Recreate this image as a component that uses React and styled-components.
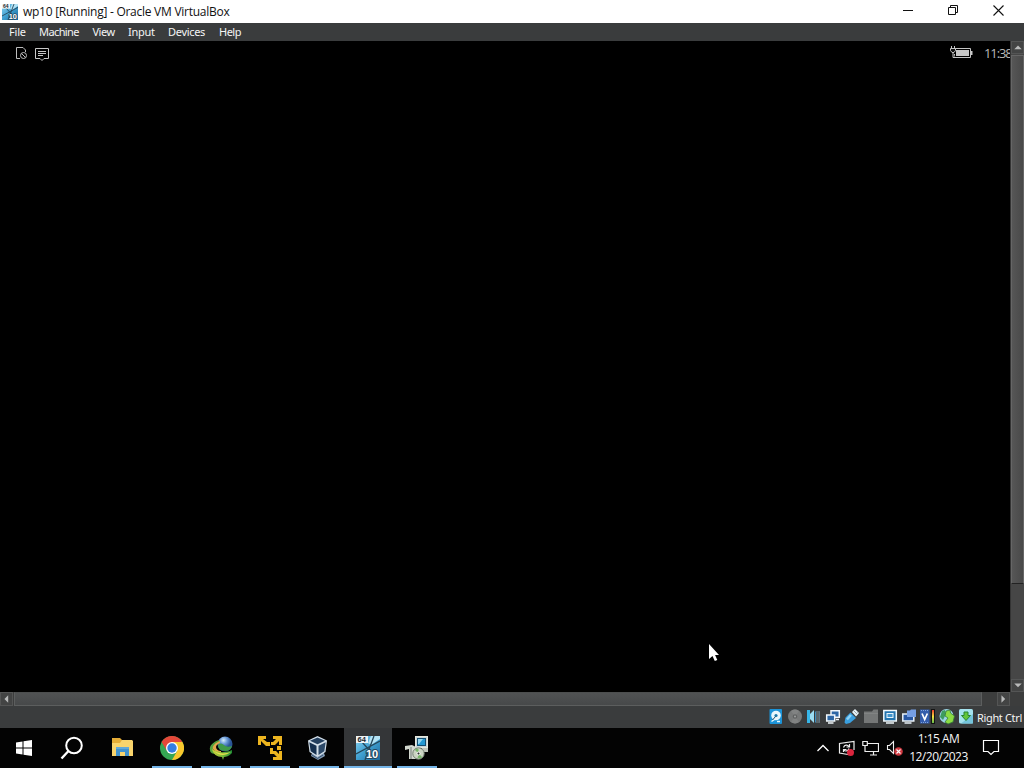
import React from "react";
import styled, { createGlobalStyle, css } from "styled-components";

/* ================= STYLES ================= */

const GlobalStyle = createGlobalStyle`
  * {
    box-sizing: border-box;
  }

  body {
    margin: 0;
    background: #000;
    overflow: hidden;
    font-family: "Open Sans", "Noto Sans", sans-serif;
  }

  svg {
    display: block;
    flex: none;
  }
`;

const Screen = styled.div`
  width: 1024px;
  height: 768px;
  display: flex;
  flex-direction: column;
  position: relative;
  overflow: hidden;
`;

const TitleBar = styled.header`
  height: 23px;
  flex: none;
  display: flex;
  align-items: center;
  padding-left: 2px;
  background: #fff;
  color: #111;
`;

const Title = styled.h1`
  margin: 1px auto 0 5px;
  font-size: 12px;
  font-weight: 400;
  line-height: 16px;
  letter-spacing: -0.26px;
  white-space: pre;
`;

const WindowButton = styled.button`
  width: ${({ $width }) => $width || 45}px;
  height: 23px;
  padding: 0 ${({ $inset }) => $inset || 0}px 2px 0;
  border: none;
  background: none;
  display: flex;
  align-items: center;
  justify-content: center;
`;

const MenuBar = styled.nav`
  height: 18px;
  flex: none;
  display: flex;
  align-items: center;
  padding-left: 9px;
  background: #3a3c3d;
`;

const MenuItem = styled.span`
  width: ${({ $width }) => $width}px;
  font-family: "Noto Sans", sans-serif;
  font-size: 11px;
  line-height: 16px;
  letter-spacing: ${({ $spacing }) => $spacing || 0}px;
  white-space: pre;
  color: #f4f4f4;
`;

const Viewport = styled.main`
  height: 651px;
  flex: none;
  display: flex;
  background: #000;
`;

const Guest = styled.section`
  width: 1010px;
  display: flex;
  align-items: flex-start;
  padding: 6px 0 0 15px;
  gap: 6px;
`;

const GuestStatus = styled.div`
  margin: -1px -1px 0 auto;
  display: flex;
  gap: 11px;
`;

const GuestClock = styled.span`
  width: 27px;
  font-size: 13px;
  line-height: 15px;
  letter-spacing: -1.1px;
  color: #b9b9b9;
  white-space: pre;
`;

const VerticalScroll = styled.div`
  width: 14px;
  display: flex;
  flex-direction: column;
  background: #464646;
  border-left: 1px solid #343434;
`;

const HorizontalScroll = styled.div`
  height: 14px;
  flex: none;
  display: flex;
  padding-right: 14px;
  background: #3c3d3d;
`;

const ScrollButton = styled.div`
  width: 13px;
  height: ${({ $horizontal }) => ($horizontal ? 14 : 13)}px;
  flex: none;
  display: flex;
  align-items: center;
  justify-content: center;
  background: #434444;
  border: 1px solid #545555;
`;

const ScrollThumb = styled.div`
  flex: none;
  ${({ $horizontal }) =>
    $horizontal
      ? css`
          width: 968px;
          margin: 0 auto 0 1px;
          background: linear-gradient(#505253, #47494a);
          border: 1px solid #5c5e5e;
          border-top-color: #4c4e4e;
        `
      : css`
          height: 529px;
          margin: 1px 0 auto;
          background: linear-gradient(90deg, #565656, #494949);
          border: 1px solid #666;
          border-bottom-color: #222;
        `}
`;

const StatusBar = styled.footer`
  height: 22px;
  flex: none;
  display: flex;
  align-items: center;
  justify-content: flex-end;
  gap: 3px;
  padding-right: 1px;
  background: #3a3c3d;
`;

const HostKey = styled.span`
  width: 46px;
  margin-top: 2px;
  font-family: "Noto Sans", sans-serif;
  font-size: 11px;
  line-height: 16px;
  letter-spacing: -0.35px;
  white-space: pre;
  color: #f4f4f4;
`;

const Taskbar = styled.div`
  height: 40px;
  flex: none;
  display: flex;
  background: #030303;
`;

const TaskButton = styled.div`
  width: 48px;
  height: 40px;
  margin-right: ${({ $gap }) => $gap ?? 1}px;
  display: flex;
  flex-direction: column;
  align-items: center;
  justify-content: space-between;
  background: ${({ $active }) => ($active ? "#343638" : "transparent")};

  &::after {
    content: "";
    width: ${({ $active }) => ($active ? 48 : 40)}px;
    height: 2px;
    background: ${({ $running }) => ($running ? "#75b5e8" : "transparent")};
  }
`;

const TaskIcon = styled.div`
  height: 38px;
  display: flex;
  align-items: center;
  padding-top: 1px;
  margin-left: ${({ $shift }) => $shift || 0}px;
`;

const Tray = styled.div`
  margin-left: auto;
  display: flex;
  align-items: center;
  padding-right: 24px;
`;

const TrayIcons = styled.div`
  display: flex;
  align-items: center;
  gap: 7px;
`;

const Clock = styled.div`
  width: 72px;
  margin: 0 7px 0 0;
  padding-right: 1px;
  text-align: center;
  font-size: 12px;
  line-height: 18px;
  letter-spacing: -0.5px;
  color: #f5f5f5;
`;

const Pointer = styled.svg`
  position: absolute;
  left: 708px;
  top: 643px;
`;

/* ================= ICONS ================= */

const WinTenIcon = ({ size = 24 }) => (
  <svg width={size} height={size} viewBox="0 0 24 24">
    <defs>
      <linearGradient id="winBlue" x1="0" y1="0" x2="1" y2="1">
        <stop offset="0" stopColor="#8ed6f2" />
        <stop offset=".5" stopColor="#3f9fd0" />
        <stop offset="1" stopColor="#1d6a9c" />
      </linearGradient>
    </defs>
    <rect width="24" height="24" fill="url(#winBlue)" />
    <path d="M15 0h9v3l-9 6-3-2z" fill="#b3e2f4" />
    <path d="M0 18L24 5M9 24L18 0M6 6l8 9" stroke="#254659" strokeWidth="1.300" />
    <rect width="12" height="7" fill="#eef3f5" />
    <text x="1.500" y="6.200" fontSize="7.500" fontWeight="700" fontFamily="Liberation Sans, sans-serif" fill="#20282d">64</text>
    <text x="10" y="22" fontSize="11" fontWeight="700" fontFamily="Liberation Sans, sans-serif" fill="#fff" stroke="#24485f" strokeWidth="2" paintOrder="stroke">10</text>
  </svg>
);

const Minimize = () => (
  <svg width="11" height="11">
    <path d="M0 5.500h10" stroke="#111" />
  </svg>
);

const Restore = () => (
  <svg width="11" height="11" fill="none" stroke="#111">
    <path d="M.5 2.500h7v7h-7zM2.500 2.500v-2h7v7h-2" />
  </svg>
);

const Close = () => (
  <svg width="11" height="11">
    <path d="M.5.5l10 10M10.500.5l-10 10" stroke="#111" strokeWidth="1.100" />
  </svg>
);

const NoSim = () => (
  <svg width="14" height="14" fill="none" stroke="#bdbdbd">
    <path d="M5 11.500H1.500V.5H8l2.500 2.500v2" />
    <circle cx="8.500" cy="8.500" r="3" />
    <path d="M6.500 6.500l4 4" />
  </svg>
);

const Message = () => (
  <svg width="14" height="14" fill="none" stroke="#c8c8c8">
    <path d="M.5 1.500h13v10H9l-2 2-2-2H.5zM3 4.500h8M3 6.500h8M3 8.500h5" />
  </svg>
);

const Battery = () => (
  <svg width="23" height="13">
    <path d="M5 2.500h15.500v9H4.500V8" fill="none" stroke="#c4c4c4" />
    <path d="M6 4h13v6H6zM21 5h1.500v4H21z" fill="#c8c8c8" />
    <path d="M1.500 0v2M4.500 0v2M.5 2.500h5v2L4 6.500H2l-1.500-2zM3 6v5.500h2" fill="#111" stroke="#c4c4c4" />
  </svg>
);

const arrows = {
  up: "M0 5l4.500-4.500L9 5z",
  down: "M0 .5h9L4.500 5z",
  left: "M5 0v9L.5 4.500z",
  right: "M.5 0v9L5 4.500z",
};

const Arrow = ({ to }) => {
  const sideways = to === "left" || to === "right";
  return (
    <svg
      width={sideways ? 5 : 8}
      height={sideways ? 8 : 5}
      viewBox={sideways ? "0 0 6 9" : "0 0 9 6"}
    >
      <path d={arrows[to]} fill="#b9baba" />
    </svg>
  );
};

const HardDisk = () => (
  <svg width="16" height="16">
    <rect x="1.500" y="0" width="12.500" height="15" rx="1" fill="#1b93d8" />
    <circle cx="8" cy="6.500" r="4.800" fill="#e9f7fc" />
    <circle cx="8" cy="6.500" r="1.600" fill="#1977aa" />
    <path d="M3.500 12.500l3-2M9 12.500h3" stroke="#e9f7fc" strokeWidth="1.500" />
    <path d="M7.500 7.500l-3 3.500" stroke="#244d68" />
  </svg>
);

const OpticalDisk = () => (
  <svg width="16" height="16">
    <circle cx="8" cy="7.500" r="7" fill="#777979" />
    <path d="M8 7.500L4 2a7 7 0 018 0zM8 7.500l4 5.500a7 7 0 01-8 0z" fill="#818383" />
    <circle cx="8" cy="7.500" r="2.200" fill="#5f6161" />
    <circle cx="8" cy="7.500" r="1" fill="#a0a2a2" />
  </svg>
);

const Audio = () => (
  <svg width="16" height="16">
    <path d="M1 1h3v13H1z" fill="#36b5e8" />
    <path d="M4 5l4-4v13l-4-4z" fill="#9bdcf2" />
    <path d="M10 3h4M10 5h4M10 7h4M10 9h4M10 11h4M10 13h4" stroke="#7b8d98" />
    <path d="M9.500 2.500v11" stroke="#3f8fc0" />
    <path d="M13.500 2.500v11" stroke="#5f7482" />
  </svg>
);

const Network = () => (
  <svg width="16" height="16">
    <path d="M6 1.800h8.300v6.500H6z" fill="#2d67a5" stroke="#f0f6fa" strokeWidth="1.500" />
    <path d="M1.700 6h8v6h-8z" fill="#2d67a5" stroke="#f0f6fa" strokeWidth="1.500" />
    <path d="M3 14h5.500M11 10.500h3" stroke="#f0f6fa" strokeWidth="1.500" />
  </svg>
);

const Usb = () => (
  <svg width="16" height="16">
    <path d="M8 3l3-3 4 4-3 3.500z" fill="#e8f2f7" />
    <path d="M6.500 3.500L12 9l-6 5-4 1-1.500-1.500 1-5z" fill="#3a9fdf" />
    <path d="M7 6l-4 4.500" stroke="#8fd2f4" strokeWidth="2.500" />
    <path d="M10.500 2.500l1 1M12.500 4.500l.8-.8" stroke="#4b5961" />
  </svg>
);

const Folder = () => (
  <svg width="16" height="16">
    <path d="M1 2.500h8L10.500.500H15V14H1z" fill="#757777" />
    <path d="M1 4.500h14" stroke="#818383" />
  </svg>
);

const Display = () => (
  <svg width="16" height="16">
    <rect x="1.800" y="1.500" width="12.500" height="10.500" fill="#2475b0" stroke="#f1f8fc" strokeWidth="1.500" />
    <rect x="5" y="4.500" width="6" height="4" fill="#4296cf" stroke="#e7f4fb" />
    <path d="M4 14h8" stroke="#f1f8fc" strokeWidth="1.500" />
  </svg>
);

const Recording = () => (
  <svg width="16" height="16">
    <path d="M1.800 5h11v7h-11z" fill="#2858a4" stroke="#e9f1f8" strokeWidth="1.500" />
    <path d="M6 1.500h3L10 .5h5V8H6z" fill="#769fe5" />
    <path d="M3.500 14h7" stroke="#e9f1f8" strokeWidth="1.500" />
  </svg>
);

const Processor = () => (
  <svg width="16" height="16">
    <defs>
      <linearGradient id="cpuLoad" x1="0" y1="0" x2="0" y2="1">
        <stop stopColor="#ee3b2a" />
        <stop offset=".5" stopColor="#f5df41" />
        <stop offset="1" stopColor="#65ba4c" />
      </linearGradient>
    </defs>
    <rect x="0" y=".5" width="9.500" height="14" fill="#345dac" />
    <path d="M1 1.500h8M1 13.500h8" stroke="#7fa2dd" strokeDasharray="1 1" />
    <path d="M2 4.500l2.700 6 2.700-6" fill="none" stroke="#fff" strokeWidth="1.700" />
    <rect x="11" y="0" width="4" height="15" fill="#131313" />
    <rect x="12" y="1" width="2" height="13" fill="url(#cpuLoad)" />
  </svg>
);

const MouseIntegration = () => (
  <svg width="16" height="16">
    <circle cx="7.500" cy="7" r="7" fill="#9bd3e4" />
    <path d="M3 2l3-1 1 4-3 6-3-3z" fill="#3e9c60" />
    <path d="M7 2l4-1 .5 3 4 3-1.500 6-5 2-3-2 3-4-3-2z" fill="#8cdc43" stroke="#337b39" strokeWidth=".8" />
  </svg>
);

const HostKeyIcon = () => (
  <svg width="16" height="16">
    <rect x="1" y="0" width="14" height="14.500" rx="1.500" fill="#a5e3ef" />
    <path d="M3 14.500L15 5v9.500z" fill="#74c4dc" />
    <path d="M6 3h4v3.500h2.500L8 11.500 3.500 6.500H6z" fill="#63c63b" stroke="#278532" />
  </svg>
);

const WindowsLogo = () => (
  <svg width="18" height="18">
    <path d="M1 3.500l6.500-1v6H1zM8.500 2.300L17 1v7.500H8.500zM1 9.500h6.500v6L1 14.600zM8.500 9.500H17V17l-8.500-1.300z" fill="#fff" />
  </svg>
);

const Search = () => (
  <svg width="24" height="24" fill="none" stroke="#fff" strokeWidth="2">
    <circle cx="14" cy="9.500" r="7.800" />
    <path d="M8.500 15L1.500 22.500" strokeWidth="2.400" />
  </svg>
);

const Explorer = () => (
  <svg width="24" height="24">
    <path d="M2 2h8l2 2h10v15H2z" fill="#e5ad37" />
    <path d="M12 4h10l1 1v15H2V7h8z" fill="#f9d46c" />
    <path d="M6 11h13v9h-4v-4H10v4H6z" fill="#4293ce" />
    <path d="M6 11h13v2H6z" fill="#62a9d9" />
  </svg>
);

const Chrome = () => (
  <svg width="24" height="24">
    <circle cx="12" cy="12" r="12" fill="#35a653" />
    <path d="M12 12L1.600 6A12 12 0 0122.400 6z" fill="#e44739" />
    <path d="M12 6h10.400A12 12 0 0112 24l5.200-9z" fill="#f9c72d" />
    <path d="M1.600 6L7 15l5-9z" fill="#e44739" />
    <circle cx="12" cy="12" r="6" fill="#fff" />
    <circle cx="12" cy="12" r="4.700" fill="#347ee2" />
  </svg>
);

const DownloadGlobe = () => (
  <svg width="24" height="24">
    <defs>
      <radialGradient id="globe" cx=".4" cy=".25">
        <stop stopColor="#d7effa" />
        <stop offset=".5" stopColor="#6a9ad8" />
        <stop offset="1" stopColor="#2a5596" />
      </radialGradient>
      <linearGradient id="swoosh" x1="0" y1="0" x2="1" y2="0">
        <stop stopColor="#c9cf3a" />
        <stop offset=".5" stopColor="#7fbd3a" />
        <stop offset="1" stopColor="#1e8a35" />
      </linearGradient>
    </defs>
    <circle cx="16" cy="8" r="7.500" fill="url(#globe)" />
    <path d="M9 9c2-2 4-2 6 0s5 2 8 1c-1 4-4 5-7 5-5 0-7-3-7-6z" fill="#3f9a48" />
    <path d="M10 4C4 6 0 10 1 14c0 3 3 4 6 4l-2-3c-2-4 1-7 6-8z" fill="#55a23c" />
    <path d="M11 5c-5 2-8 5-7 8 1 2 4 4 8 4v-2c-3 0-5-2-5-4s2-3 4-4z" fill="#e3a74c" />
    <path d="M3 13c6 4 13 4 20 1v3c-3 3-6 4-8 4l-1 3-1-3c-5 0-9-3-10-8z" fill="url(#swoosh)" />
    <path d="M5 15c5 3 11 3 17 1-6 4-12 4-17-1z" fill="#e1df4c" />
  </svg>
);

const Vmware = () => (
  <svg width="24" height="24" fill="#edb51f">
    <path d="M0 0h8v3H5l4 3h3v4H8L3 5v4H0z" />
    <path d="M15 0h9v9h-3V5l-4 4h-4V6h2l3-3h-3z" />
    <path d="M12 12h3v3h3l3 3v-3h3v9h-9v-3h4l-3-3h-4z" />
    <path d="M19 10h4v4h-4z" />
  </svg>
);

const VirtualBox = () => (
  <svg width="24" height="24">
    <path d="M6 17l12 0 1 3-7 4-7-4z" fill="#839bb5" />
    <path d="M11.500 0L21 4.500 19.500 16l-8 5-8-5L2 4.500z" fill="#d3dfe9" />
    <path d="M11.500 1.500l7.500 3.300-7.500 3.400L4 4.800z" fill="#233f5e" />
    <path d="M3.300 6.300l7.200 3.400v9.200l-5.800-3.700z" fill="#15304f" />
    <path d="M19.700 6.300l-7.200 3.400v9.200l5.800-3.700z" fill="#2d4a69" />
    <path d="M6 19l5.500 3.500L17 19" stroke="#344f6d" fill="none" />
  </svg>
);

const Installer = () => (
  <svg width="24" height="24">
    <rect x="10.500" y=".5" width="12" height="11" fill="#c8d6d9" stroke="#e6e8dd" />
    <rect x="12.500" y="2.500" width="8" height="7" fill="#2499d3" stroke="#144e70" />
    <path d="M13 3h5l-4 5h-1z" fill="#94d6ef" />
    <path d="M17 12h6v4h-6z" fill="#bfc5bb" />
    <path d="M0 10l7-1 4 2v12H4V13l-4 1z" fill="#d2d7ce" />
    <path d="M6 11v12" stroke="#727d76" />
    <circle cx="13.500" cy="17.500" r="5.700" fill="#cad4c2" stroke="#747f73" />
    <path d="M13.500 17.500l-4-4 4-1zM13.500 17.500l4 4-5 1z" fill="#77b568" />
    <circle cx="13.500" cy="17.500" r="1.500" fill="#333" stroke="#fff" />
  </svg>
);

const Chevron = () => (
  <svg width="15" height="10">
    <path d="M1.500 8L7 2.500 12.500 8" stroke="#fff" fill="none" strokeWidth="1.300" />
  </svg>
);

const Update = () => (
  <svg width="17" height="17" fill="none" stroke="#eee" strokeWidth="1.200">
    <path d="M10 14.500L1.500 13V3.500L16 1.500V10" />
    <path d="M5.500 7.500c1-3 4-3 5.500-1M11.500 4v3H8.500M11 8.500c-1 3-4 3-5 1.500M5.500 12V9.500h3" />
    <circle cx="12.500" cy="12.500" r="3.500" fill="#db263e" stroke="none" />
  </svg>
);

const Ethernet = () => (
  <svg width="17" height="17" fill="none" stroke="#eee">
    <path d="M5.500 3.500h11v8h-9M11.500 12v3M8 15h7M.8 1.500h4.500v4H.8zM3 5.500v6h5" strokeWidth="1.200" />
  </svg>
);

const Muted = () => (
  <svg width="17" height="17">
    <path d="M1.500 5.500h2l4-4v12l-4-4h-2z" fill="none" stroke="#eee" strokeWidth="1.100" />
    <circle cx="12.500" cy="11.500" r="4.300" fill="#cf3941" />
    <path d="M10.500 9.500l4 4M14.500 9.500l-4 4" stroke="#fff" strokeWidth="1.100" />
  </svg>
);

const Notifications = () => (
  <svg width="18" height="18">
    <path d="M1.500 1.500h15v11H12l-3 3-3-3H1.500z" fill="none" stroke="#fff" strokeWidth="1.200" />
  </svg>
);

/* ================= COMPONENT ================= */

const menus = [
  { name: "File", width: 30, spacing: -0.2 },
  { name: "Machine", width: 53.5, spacing: -0.6 },
  { name: "View", width: 35.5, spacing: -0.5 },
  { name: "Input", width: 40, spacing: -0.25 },
  { name: "Devices", width: 51, spacing: -0.3 },
  { name: "Help", width: 30, spacing: -0.5 },
];

const devices = [
  HardDisk,
  OpticalDisk,
  Audio,
  Network,
  Usb,
  Folder,
  Display,
  Recording,
  Processor,
  MouseIntegration,
  HostKeyIcon,
];

const tasks = [
  { icon: WindowsLogo },
  { icon: Search, shift: -2 },
  { icon: Explorer, gap: 2, shift: -1 },
  { icon: Chrome, running: true },
  { icon: DownloadGlobe, running: true, shift: -1 },
  { icon: Vmware, running: true },
  { icon: VirtualBox, running: true, shift: -2 },
  { icon: WinTenIcon, running: true, active: true },
  { icon: Installer, running: true, shift: -1 },
];

const App = () => (
  <>
    <GlobalStyle />
    <Screen>
      <TitleBar>
        <WinTenIcon size={16} />
        <Title>wp10 [Running] - Oracle VM VirtualBox</Title>
        <WindowButton aria-label="Minimize"><Minimize /></WindowButton>
        <WindowButton aria-label="Restore"><Restore /></WindowButton>
        <WindowButton aria-label="Close" $width={48} $inset={3}><Close /></WindowButton>
      </TitleBar>

      <MenuBar>
        {menus.map(({ name, width, spacing }) => (
          <MenuItem key={name} $width={width} $spacing={spacing}>{name}</MenuItem>
        ))}
      </MenuBar>

      <Viewport>
        <Guest>
          <NoSim />
          <Message />
          <GuestStatus>
            <Battery />
            <GuestClock>11:38</GuestClock>
          </GuestStatus>
        </Guest>
        <VerticalScroll>
          <ScrollButton><Arrow to="up" /></ScrollButton>
          <ScrollThumb />
          <ScrollButton><Arrow to="down" /></ScrollButton>
        </VerticalScroll>
      </Viewport>

      <HorizontalScroll>
        <ScrollButton $horizontal><Arrow to="left" /></ScrollButton>
        <ScrollThumb $horizontal />
        <ScrollButton $horizontal><Arrow to="right" /></ScrollButton>
      </HorizontalScroll>

      <StatusBar>
        {devices.map((Icon) => (
          <Icon key={Icon.name} />
        ))}
        <HostKey>Right Ctrl</HostKey>
      </StatusBar>

      <Taskbar>
        {tasks.map(({ icon: Icon, running, active, gap, shift }) => (
          <TaskButton key={Icon.name} $running={running} $active={active} $gap={gap}>
            <TaskIcon $shift={shift}><Icon /></TaskIcon>
          </TaskButton>
        ))}
        <Tray>
          <TrayIcons>
            <Chevron />
            <Update />
            <Ethernet />
            <Muted />
          </TrayIcons>
          <Clock>
            <div>1:15 AM</div>
            <div>12/20/2023</div>
          </Clock>
          <Notifications />
        </Tray>
      </Taskbar>

      <Pointer width="12" height="19">
        <path d="M1 1v15l3.500-3 2.300 5 2.500-1-2.200-5H11z" fill="#fff" />
      </Pointer>
    </Screen>
  </>
);

export default App;
